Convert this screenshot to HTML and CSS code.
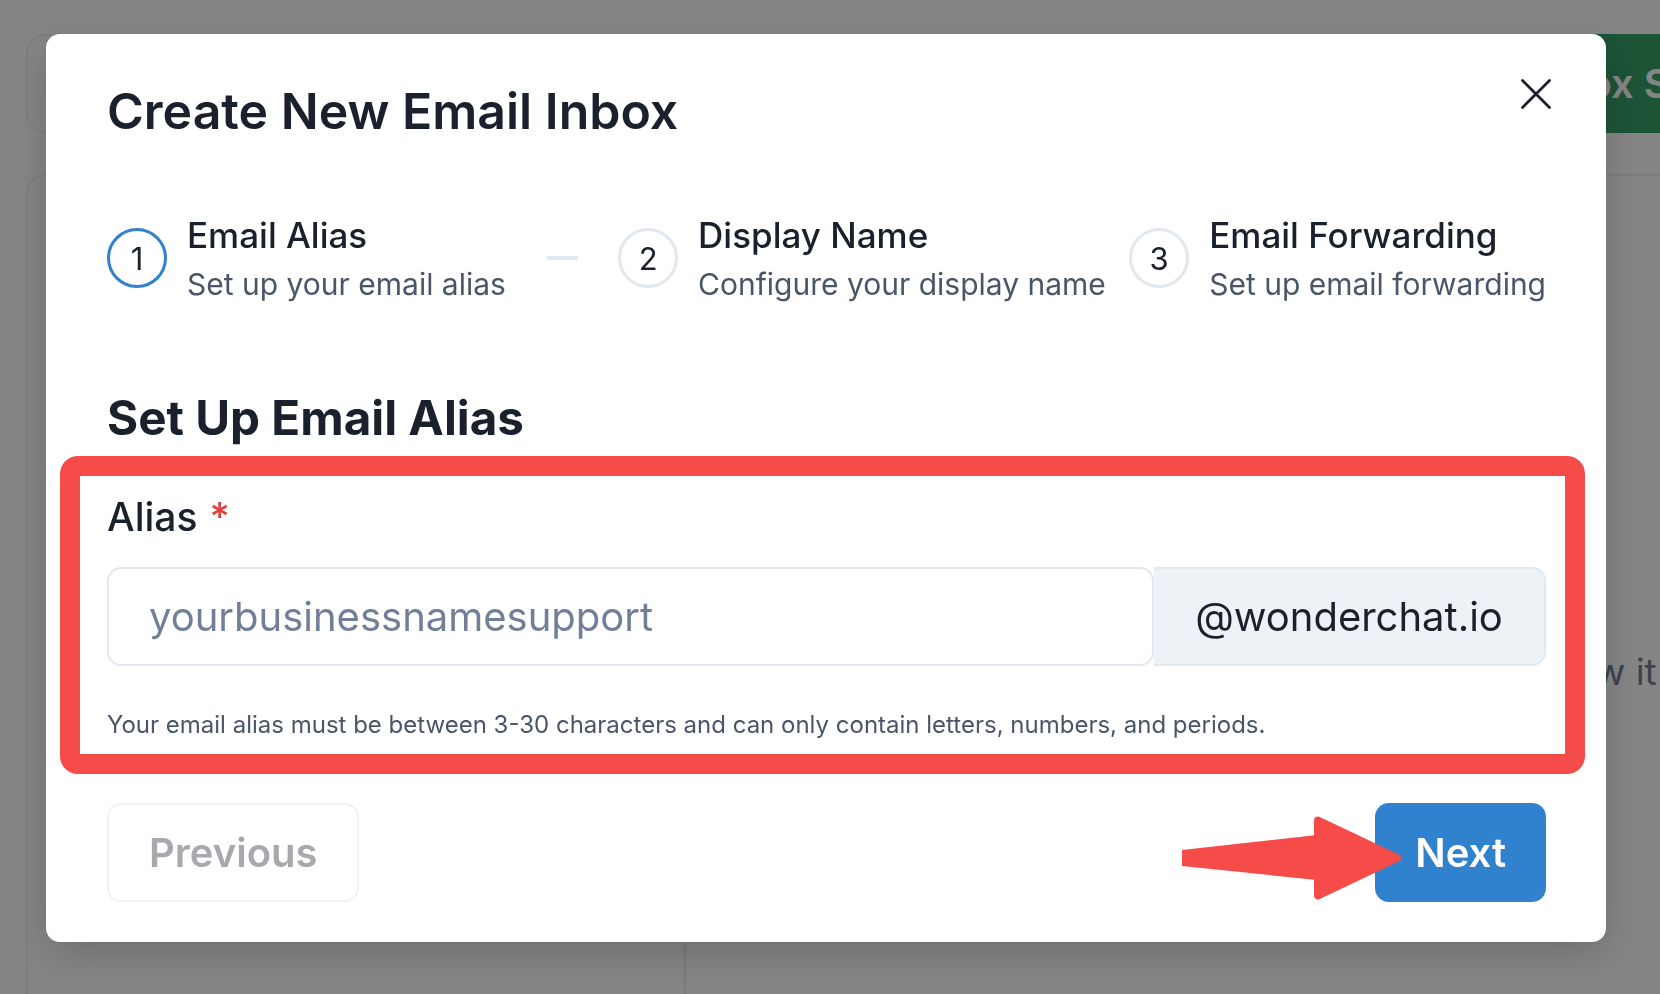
FILE: index.html
```html
<!DOCTYPE html>
<html lang="en">
<head>
<meta charset="utf-8">
<title>Create New Email Inbox</title>
<link rel="stylesheet" href="styles.css">
</head>
<body>
<div class="page">
  <div class="topbar">
    <div class="search-card"></div>
    <button class="create-btn" type="button">Create Inbox Setup</button>
  </div>
  <div class="main-card">
    <div class="list-col"></div>
    <div class="detail-col"><p class="empty-text">Select an inbox to view it</p></div>
  </div>
</div>

<div class="overlay"></div>

<section class="modal" role="dialog" aria-labelledby="modal-title">
  <button class="close" type="button" aria-label="Close">
    <svg viewBox="0 0 30 30" width="30" height="30"><path d="M1.5 1.5 L28.5 28.5 M28.5 1.5 L1.5 28.5" fill="none" stroke="#1a202c" stroke-width="2.8" stroke-linecap="round"/></svg>
  </button>
  <h2 class="modal-title" id="modal-title">Create New Email Inbox</h2>

  <div class="stepper">
    <div class="step">
      <div class="step-indicator active">1</div>
      <div class="step-text">
        <div class="step-title">Email Alias</div>
        <div class="step-desc">Set up your email alias</div>
      </div>
      <div class="step-sep"></div>
    </div>
    <div class="step">
      <div class="step-indicator">2</div>
      <div class="step-text">
        <div class="step-title">Display Name</div>
        <div class="step-desc">Configure your display name</div>
      </div>
      <div class="step-sep"></div>
    </div>
    <div class="step">
      <div class="step-indicator">3</div>
      <div class="step-text">
        <div class="step-title">Email Forwarding</div>
        <div class="step-desc">Set up email forwarding</div>
      </div>
    </div>
  </div>

  <h3 class="section-title">Set Up Email Alias</h3>

  <div class="field">
    <div class="highlight"></div>
    <label class="field-label" for="alias">Alias<span class="req">*</span></label>
    <div class="input-group">
      <input class="input" id="alias" type="text" placeholder="yourbusinessnamesupport">
      <div class="addon">@wonderchat.io</div>
    </div>
    <p class="helper">Your email alias must be between 3-30 characters and can only contain letters, numbers, and periods.</p>
  </div>

  <div class="footer">
    <button class="btn btn-prev" type="button" disabled>Previous</button>
    <button class="btn btn-next" type="button">Next</button>
    <svg class="arrow" viewBox="0 0 235 100" width="235" height="100">
      <polygon points="7,42 142,27 142,72 7,58" fill="#f54b49"/>
      <polygon points="143,12.5 222,50 143,87.5" fill="#f54b49" stroke="#f54b49" stroke-width="8" stroke-linejoin="round"/>
    </svg>
  </div>
</section>
</body>
</html>
```

FILE: styles.css
```css
html, body {
  margin: 0;
  padding: 0;
  overflow: hidden;
  background: #ffffff;
  font-family: "Inter", "Liberation Sans", sans-serif;
}

.page {
  padding: 34px 0 0 26px;
  height: 994px;
  box-sizing: border-box;
}

.topbar {
  display: flex;
  gap: 24px;
  height: 99px;
}

.search-card {
  width: 1296px;
  flex-shrink: 0;
  box-sizing: border-box;
  border: 2px solid #edf2f7;
  border-radius: 20px;
}

.create-btn {
  flex-shrink: 0;
  border: none;
  border-radius: 14px;
  background: #38a169;
  color: #ffffff;
  font: 600 40px/1 "Inter", "Liberation Sans", sans-serif;
  padding: 0 42px;
  white-space: nowrap;
}

.main-card {
  margin-top: 41px;
  width: 1900px;
  height: 900px;
  box-sizing: border-box;
  border: 2px solid #edf2f7;
  border-radius: 20px;
  display: flex;
}

.list-col {
  width: 656px;
  flex-shrink: 0;
  border-right: 2px solid #e2e8f0;
}

.detail-col {
  flex: 1;
  padding: 473px 0 0 536px;
}

.empty-text {
  margin: 0;
  font: 400 37px/46px "Inter", "Liberation Sans", sans-serif;
  color: #718096;
  white-space: nowrap;
}

.overlay {
  position: fixed;
  inset: 0;
  background: rgba(0, 0, 0, 0.48);
}

.modal {
  position: fixed;
  left: 46px;
  top: 34px;
  width: 1560px;
  box-sizing: border-box;
  padding: 47px 60px 40px 61px;
  background: #ffffff;
  border-radius: 14px;
  box-shadow: 0 12px 40px rgba(0, 0, 0, 0.18);
  color: #1a202c;
}

.close {
  position: absolute;
  top: 45px;
  right: 55px;
  width: 30px;
  height: 30px;
  padding: 0;
  border: none;
  background: none;
  display: flex;
}

.modal-title {
  margin: 0;
  font: 600 50px/60px "Inter", "Liberation Sans", sans-serif;
  color: #1a202c;
}

.stepper {
  display: flex;
  margin-top: 72px;
}

.step {
  display: flex;
  align-items: flex-start;
  flex: 1 1 0;
  min-width: 0;
}

.step:last-child {
  flex: 0 0 auto;
}

.step-indicator {
  width: 60px;
  height: 60px;
  box-sizing: border-box;
  border: 3.5px solid #e2e8f0;
  border-radius: 50%;
  flex-shrink: 0;
  margin-top: 15px;
  display: flex;
  align-items: center;
  justify-content: center;
  font: 400 31px/1 "Inter", "Liberation Sans", sans-serif;
  color: #1a202c;
}

.step-indicator.active {
  border-color: #3182ce;
}

.step-text {
  margin-left: 20px;
  flex-shrink: 0;
  white-space: nowrap;
}

.step-title {
  font: 500 35px/44px "Inter", "Liberation Sans", sans-serif;
  color: #1a202c;
}

.step-desc {
  margin-top: 5px;
  font: 400 30px/44px "Inter", "Liberation Sans", sans-serif;
  color: #4a5568;
}

.step-sep {
  flex: 1 1 0;
  min-width: 0;
  height: 4px;
  background: #e2e8f0;
  margin: 43px 40px 0 41px;
}

.section-title {
  margin: 84px 0 0;
  font: 700 47.6px/56px "Inter", "Liberation Sans", sans-serif;
  color: #1a202c;
}

.field {
  position: relative;
  margin-top: 47px;
}

.highlight {
  position: absolute;
  top: -37px;
  bottom: -33px;
  left: -47px;
  right: -39px;
  border: 20px solid #f54b49;
  border-radius: 18px;
  pointer-events: none;
}

.field-label {
  display: block;
  font: 500 39px/48px "Inter", "Liberation Sans", sans-serif;
  color: #1a202c;
}

.req {
  color: #e53e3e;
  margin-left: 12px;
}

.input-group {
  display: flex;
  margin-top: 26px;
  height: 99px;
}

.input {
  flex: 1;
  min-width: 0;
  height: 99px;
  box-sizing: border-box;
  margin: 0;
  border: 2px solid #e2e8f0;
  border-radius: 14px;
  padding: 0 40px;
  font: 400 40px "Inter", "Liberation Sans", sans-serif;
  color: #1a202c;
  background: #ffffff;
  outline: none;
}

.input::placeholder {
  color: #718096;
  opacity: 1;
}

.addon {
  width: 392px;
  flex-shrink: 0;
  box-sizing: border-box;
  border: 2px solid #e2e8f0;
  border-left: none;
  border-radius: 0 14px 14px 0;
  background: #edf2f7;
  display: flex;
  align-items: center;
  justify-content: center;
  font: 400 40px "Inter", "Liberation Sans", sans-serif;
  color: #1a202c;
}

.helper {
  margin: 43px 0 0;
  font: 400 24px/32px "Inter", "Liberation Sans", sans-serif;
  color: #4a5568;
}

.footer {
  position: relative;
  display: flex;
  justify-content: space-between;
  margin-top: 62px;
}

.btn {
  height: 99px;
  box-sizing: border-box;
  border-radius: 14px;
  padding: 0 40px;
  font: 600 40px/1 "Inter", "Liberation Sans", sans-serif;
}

.btn-prev {
  border: 2px solid #f0f2f5;
  background: #ffffff;
  color: #a6a9ae;
}

.btn-next {
  border: none;
  background: #3182ce;
  color: #ffffff;
}

.arrow {
  position: absolute;
  left: 1068px;
  top: 5px;
}
```
